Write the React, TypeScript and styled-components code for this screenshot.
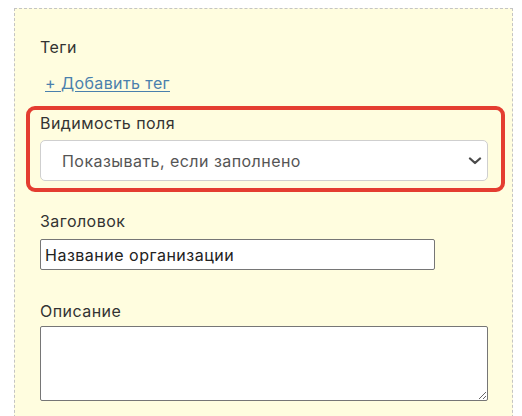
import React from "react";
import styled, { createGlobalStyle } from "styled-components";

const Global = createGlobalStyle`
  html, body { margin: 0; padding: 0; background: #ffffff; }
  body { font-family: Inter, "Noto Sans", sans-serif; overflow: hidden; }
`;

const Panel = styled.div`
  margin: 8px 9px 0 14px;
  height: 420px;
  box-sizing: border-box;
  border: 1px dashed #c4c4c4;
  border-bottom: none;
  background: #fffddf;
  padding: 28px 24px 0 25px;
  display: flex;
  flex-direction: column;
`;

const Field = styled.div<{ $mt?: number }>`
  position: relative;
  margin-top: ${(p) => p.$mt ?? 0}px;
  display: flex;
  flex-direction: column;
`;

const Highlight = styled(Field)`
  &::before {
    content: "";
    position: absolute;
    inset: -7px -17px -11px -14px;
    border: 4px solid #e43d31;
    border-radius: 9px;
    pointer-events: none;
  }
`;

const Label = styled.div<{ $gap?: number }>`
  font-size: 16px;
  line-height: 20px;
  letter-spacing: 0.45px;
  color: #333333;
  margin-bottom: ${(p) => p.$gap ?? 7}px;
`;

const AddLink = styled.a`
  font-size: 16px;
  line-height: 20px;
  letter-spacing: 0.4px;
  color: #4a80ad;
  text-decoration: underline;
  text-underline-offset: 2px;
  margin-left: 5px;
  cursor: pointer;
  align-self: flex-start;
`;

const SelectBox = styled.div`
  position: relative;
  width: 448px;
  height: 41px;
  box-sizing: border-box;
  border: 1px solid #cfcfcf;
  border-radius: 5px;
  background: #ffffff;
  display: flex;
  align-items: center;
  padding: 0 40px 0 21px;
  font-size: 16px;
  letter-spacing: 0.45px;
  color: #555555;
`;

const Chevron = styled.svg`
  position: absolute;
  right: 5px;
  top: 50%;
  transform: translateY(-50%);
`;

const TextInput = styled.input`
  width: 395px;
  height: 31px;
  box-sizing: border-box;
  border: 1px solid #767676;
  border-radius: 2px;
  padding: 0 4px;
  font-family: Inter, "Noto Sans", sans-serif;
  font-size: 16px;
  letter-spacing: 0.5px;
  color: #222222;
  background: #ffffff;
  outline: none;
`;

const TextArea = styled.textarea`
  width: 448px;
  height: 75px;
  box-sizing: border-box;
  border: 1px solid #767676;
  border-radius: 2px;
  background: #ffffff;
  font-family: Inter, "Noto Sans", sans-serif;
  font-size: 16px;
  outline: none;
`;

export default function App() {
  return (
    <>
      <Global />
      <Panel>
        <Field>
          <Label $gap={16}>Теги</Label>
          <AddLink>+ Добавить тег</AddLink>
        </Field>
        <Highlight $mt={20}>
          <Label $gap={7}>Видимость поля</Label>
          <SelectBox>
            Показывать, если заполнено
            <Chevron width="14" height="8" viewBox="0 0 14 8">
              <path d="M2 1.5 L7 6 L12 1.5" fill="none" stroke="#4a4a4a" strokeWidth="2.3" strokeLinecap="round" strokeLinejoin="round" />
            </Chevron>
          </SelectBox>
        </Highlight>
        <Field $mt={30}>
          <Label $gap={8}>Заголовок</Label>
          <TextInput defaultValue="Название организации" />
        </Field>
        <Field $mt={31}>
          <Label $gap={5}>Описание</Label>
          <TextArea />
        </Field>
      </Panel>
    </>
  );
}
